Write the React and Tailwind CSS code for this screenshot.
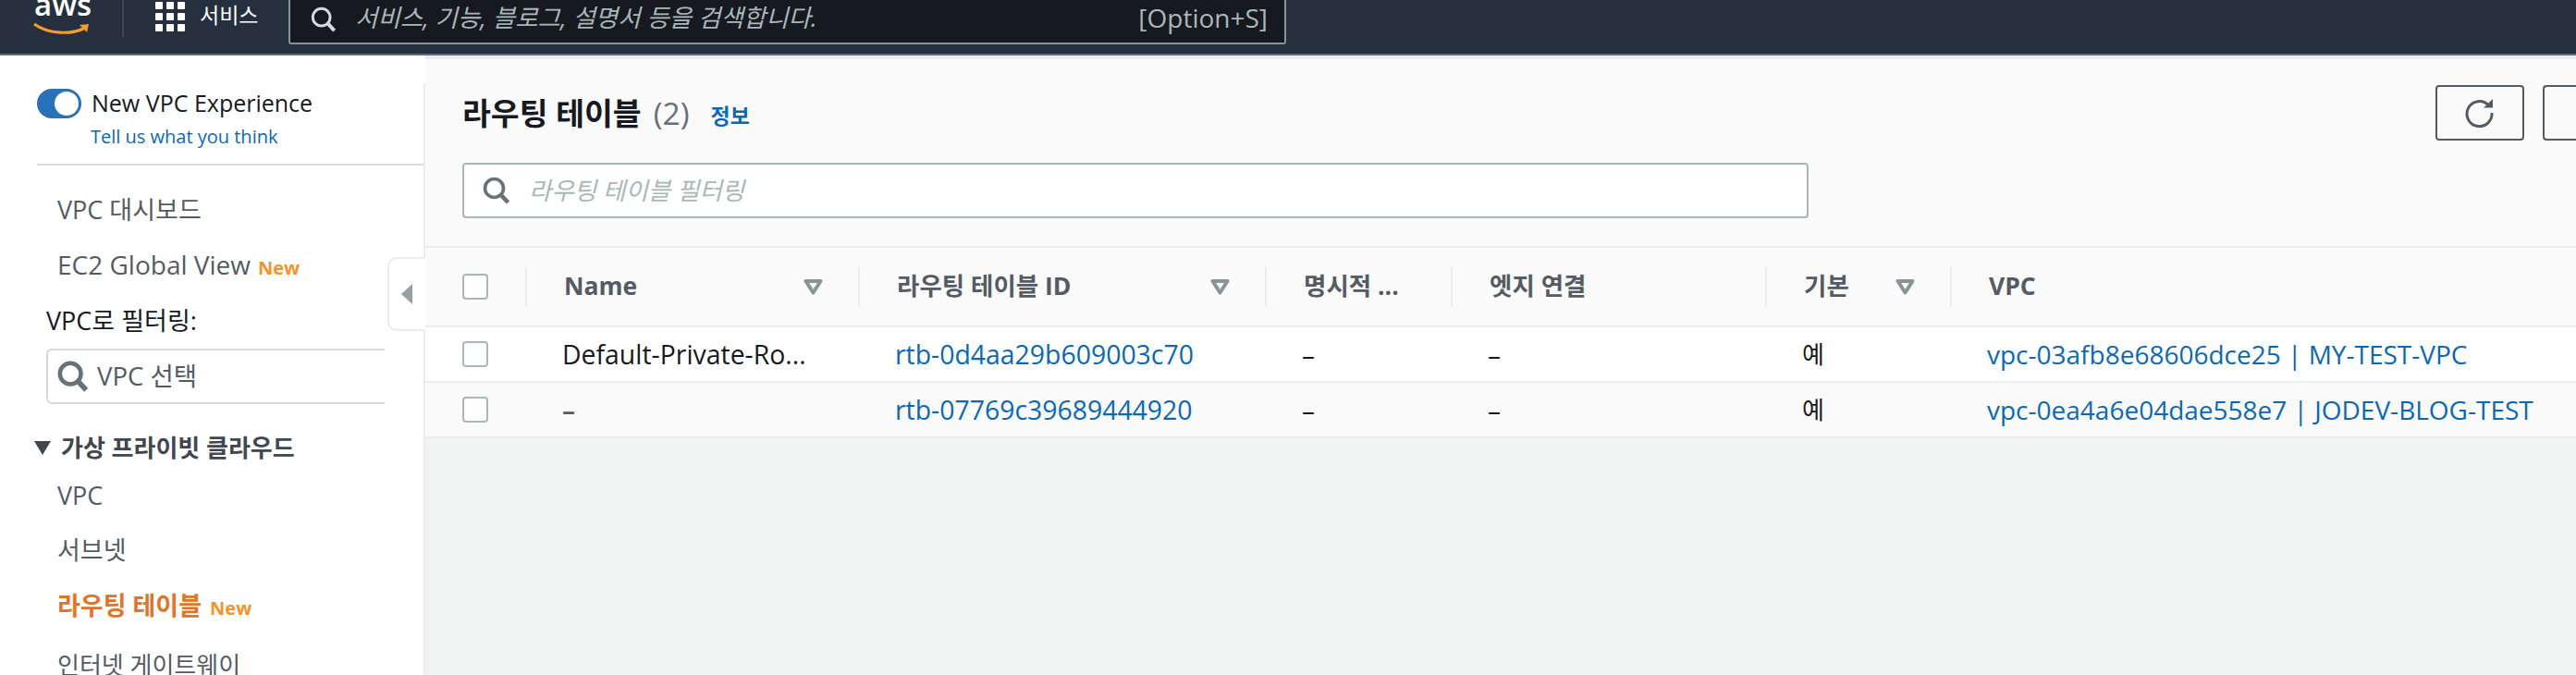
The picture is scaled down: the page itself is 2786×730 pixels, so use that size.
const FONT = { fontFamily: '"Open Sans","Noto Sans CJK KR",sans-serif' };

function SearchIcon({ className, color = "currentColor", sw = 3.2 }) {
  return (
    <svg viewBox="0 0 30 30" className={className} fill="none" stroke={color} strokeWidth={sw}>
      <circle cx="12.5" cy="12.5" r="10" />
      <path d="M19.5 19.5 L27.5 28" strokeWidth={sw + 1} />
    </svg>
  );
}

function FilterTri() {
  return (
    <svg viewBox="0 0 21 17" className="w-[21px] h-[17px] shrink-0">
      <path d="M2.5 2 H18.5 L10.5 14.5 Z" fill="none" stroke="#879596" strokeWidth="4" strokeLinejoin="round" />
    </svg>
  );
}

function Check() {
  return <div className="w-7 h-7 rounded-[4px] border-2 border-[#aab7b8] bg-white shrink-0" />;
}

function NavItem({ children, className = "" }) {
  return <div className={`pl-[62px] leading-[36px] whitespace-nowrap ${className}`}>{children}</div>;
}

function New({ className = "" }) {
  return <span className={`ml-2 text-[20px] font-bold text-[#f2932e] ${className}`}>New</span>;
}

function Head({ children, filter }) {
  return (
    <div className="h-[42px] border-r-2 border-[#eaeded] last:border-r-0 flex items-center justify-between pl-[40px] pr-[38px]">
      <span className="text-[26.5px] font-bold text-[#545b64] whitespace-nowrap">{children}</span>
      {filter && <FilterTri />}
    </div>
  );
}

function Cell({ children, className = "text-[28px] text-[#16191f]" }) {
  return <div className={`pl-[38px] whitespace-nowrap ${className}`}>{children}</div>;
}

const COLS = "grid grid-cols-[110px_360px_440px_201px_340px_200px_1fr] items-center";

function Row({ bg, name, nameClass, id, def, vpc }) {
  return (
    <div className={`${COLS} h-[60px] border-b-2 border-[#eaeded] ${bg}`}>
      <div className="pl-10"><Check /></div>
      <Cell className={nameClass}>{name}</Cell>
      <Cell className="text-[28.4px] text-[#0b68b5]">{id}</Cell>
      <Cell>–</Cell>
      <Cell>–</Cell>
      <Cell className="text-[26px] text-[#16191f]">{def}</Cell>
      <Cell className="text-[28px] text-[#0b68b5]">{vpc}</Cell>
    </div>
  );
}

export default function App() {
  return (
    <div style={FONT} className="w-[2786px] h-[730px] overflow-hidden bg-[#f2f3f3] flex flex-col">
      <header className="h-[60px] shrink-0 bg-[#262f3e] border-b-2 border-[#5f6b7a] flex items-start">
        <div className="relative w-[134px] h-[40px] border-r-2 border-[#3c4655] shrink-0">
          <span className="absolute left-[37px] -top-[15px] text-[33px] leading-[40px] font-semibold text-white">aws</span>
          <svg viewBox="0 0 62 14" className="absolute left-[36px] top-[24px] w-[62px] h-[14px]">
            <path d="M1 2 C16 13 42 14 56 6" fill="none" stroke="#f39c2b" strokeWidth="3.2" />
            <path d="M50 3 L60 2 L58 11 Z" fill="#f39c2b" />
          </svg>
        </div>
        <div className="ml-[34px] mt-[2px] grid grid-cols-3 gap-[4px] w-[32px] shrink-0">
          {Array.from({ length: 9 }).map((_, i) => (
            <div key={i} className="w-2 h-2 rounded-[1px] bg-white" />
          ))}
        </div>
        <span className="ml-[16px] w-[62px] mt-[1px] text-[23px] leading-[30px] text-white whitespace-nowrap">서비스</span>
        <div className="ml-[34px] w-[1079px] h-[48px] shrink-0 bg-[#16191f] border-2 border-t-0 border-[#879596] rounded-b-[3px] flex items-center pl-[22px] pr-[18px]">
          <SearchIcon className="w-[28px] h-[28px] shrink-0 -mt-[4px]" color="#d5dbdb" />
          <span className="ml-[20px] -mt-[7px] text-[26.5px] italic text-[#aab7b8] whitespace-nowrap">서비스, 기능, 블로그, 설명서 등을 검색합니다.</span>
          <span className="ml-auto -mt-[8px] text-[28px] text-[#aab7b8] whitespace-nowrap">[Option+S]</span>
        </div>
      </header>

      <div className="flex flex-1 min-h-0">
        <aside className="relative w-[460px] shrink-0 bg-white pt-[30px]">
          <div className="absolute right-0 top-[30px] bottom-0 w-[2px] bg-[#eaeded]" />
          <div className="ml-10 h-[89px] border-b-2 border-[#d5dbdb]">
            <div className="flex items-center gap-[11px] h-[44px]">
              <div className="w-12 h-8 rounded-full bg-[#2a72b8] flex items-center justify-end pr-[3px] shrink-0">
                <div className="w-[26px] h-[26px] rounded-full bg-white" />
              </div>
              <span className="text-[25px] text-[#16191f] whitespace-nowrap">New VPC Experience</span>
            </div>
            <div className="pl-[58px] text-[20px] leading-[28px] text-[#0b68b5] whitespace-nowrap">Tell us what you think</div>
          </div>

          <NavItem className="mt-[30px] text-[27px] text-[#545b64]">VPC 대시보드</NavItem>
          <NavItem className="mt-[23px] text-[28px] text-[#545b64]">EC2 Global View<New /></NavItem>
          <div className="pl-[50px] mt-[21px] text-[27px] leading-[36px] text-[#16191f] whitespace-nowrap">VPC로 필터링:</div>
          <div className="ml-[50px] mt-[12px] w-[366px] h-[60px] border-2 border-r-0 border-[#d5dbdb] rounded-l-[6px] flex items-center pl-[10px]">
            <SearchIcon className="w-[34px] h-[36px] shrink-0" color="#687078" sw={4} />
            <span className="ml-[9px] text-[27.5px] text-[#545b64] whitespace-nowrap">VPC 선택</span>
          </div>
          <div className="mt-[29px] pl-[36px] flex items-center h-[36px]">
            <svg viewBox="0 0 20 16" className="w-5 h-4 shrink-0"><path d="M1 1 H19 L10 16 Z" fill="#414750" /></svg>
            <span className="ml-[10px] text-[26px] font-semibold text-[#414750] whitespace-nowrap">가상 프라이빗 클라우드</span>
          </div>
          <NavItem className="mt-[16px] text-[27px] text-[#545b64]">VPC</NavItem>
          <NavItem className="mt-[23px] text-[27px] text-[#545b64]">서브넷</NavItem>
          <NavItem className="mt-[24px] text-[27px] text-[#e07428] font-bold">라우팅 테이블<New className="ml-[9px]" /></NavItem>
          <NavItem className="mt-[25px] text-[26px] text-[#545b64]">인터넷 게이트웨이</NavItem>

          <div className="absolute left-[419px] top-[218px] w-[41px] h-[80px] bg-white border-2 border-r-0 border-[#eaeded] rounded-l-[10px] flex items-center pl-[13px]">
            <svg viewBox="0 0 12 22" className="w-3 h-[22px]"><path d="M12 0 V22 L0 11 Z" fill="#98a0a3" /></svg>
          </div>
        </aside>

        <main className="flex-1 min-w-0 flex flex-col border-t-4 border-[#eaeded]">
          <div className="bg-[#fafafa] h-[202px] shrink-0 relative pl-10 pt-[28px]">
            <div className="flex items-start justify-between h-[60px]">
              <div className="flex items-center h-[60px] whitespace-nowrap">
                <span className="text-[33.5px] font-bold text-[#16191f]">라우팅 테이블</span>
                <span className="ml-[13px] text-[33.5px] text-[#687078]">(2)</span>
                <span className="ml-[23px] mt-[6px] text-[23px] font-bold text-[#0b68b5]">정보</span>
              </div>
              <div className="flex gap-5 shrink-0">
                <div className="w-[96px] h-[60px] border-2 border-[#545b64] rounded-[4px] flex items-center justify-center">
                  <svg viewBox="0 0 34 34" className="w-[34px] h-[34px]" fill="none">
                    <path d="M26.5 9 A13.5 13.5 0 1 0 30 17" stroke="#545b64" strokeWidth="3" />
                    <path d="M21 11.5 H31 V2 Z" fill="#545b64" />
                  </svg>
                </div>
                <div className="w-[36px] h-[60px] border-2 border-r-0 border-[#545b64] rounded-l-[4px]" />
              </div>
            </div>
            <div className="mt-6 w-[1456px] h-[60px] bg-white border-2 border-[#aab7b8] rounded-[4px] flex items-center pl-5">
              <SearchIcon className="w-[30px] h-[30px] shrink-0" color="#687078" sw={3.6} />
              <span className="ml-5 mt-[2px] text-[26.5px] italic text-[#aab7b8] whitespace-nowrap">라우팅 테이블 필터링</span>
            </div>
          </div>

          <div className={`${COLS} h-[88px] bg-[#fafafa] border-y-2 border-[#eaeded] shrink-0`}>
            <div className="h-[42px] border-r-2 border-[#eaeded] pl-10 flex items-center"><Check /></div>
            <Head filter>Name</Head>
            <Head filter>라우팅 테이블 ID</Head>
            <Head>명시적 ...</Head>
            <Head>엣지 연결</Head>
            <Head filter>기본</Head>
            <Head>VPC</Head>
          </div>
          <Row bg="bg-white" nameClass="text-[28.4px] text-[#16191f]" name="Default-Private-Ro..." id="rtb-0d4aa29b609003c70" def="예" vpc="vpc-03afb8e68606dce25 | MY-TEST-VPC" />
          <Row bg="bg-[#fafafa]" nameClass="text-[28px] font-semibold text-[#545b64]" name="–" id="rtb-07769c39689444920" def="예" vpc="vpc-0ea4a6e04dae558e7 | JODEV-BLOG-TEST" />
        </main>
      </div>
    </div>
  );
}
